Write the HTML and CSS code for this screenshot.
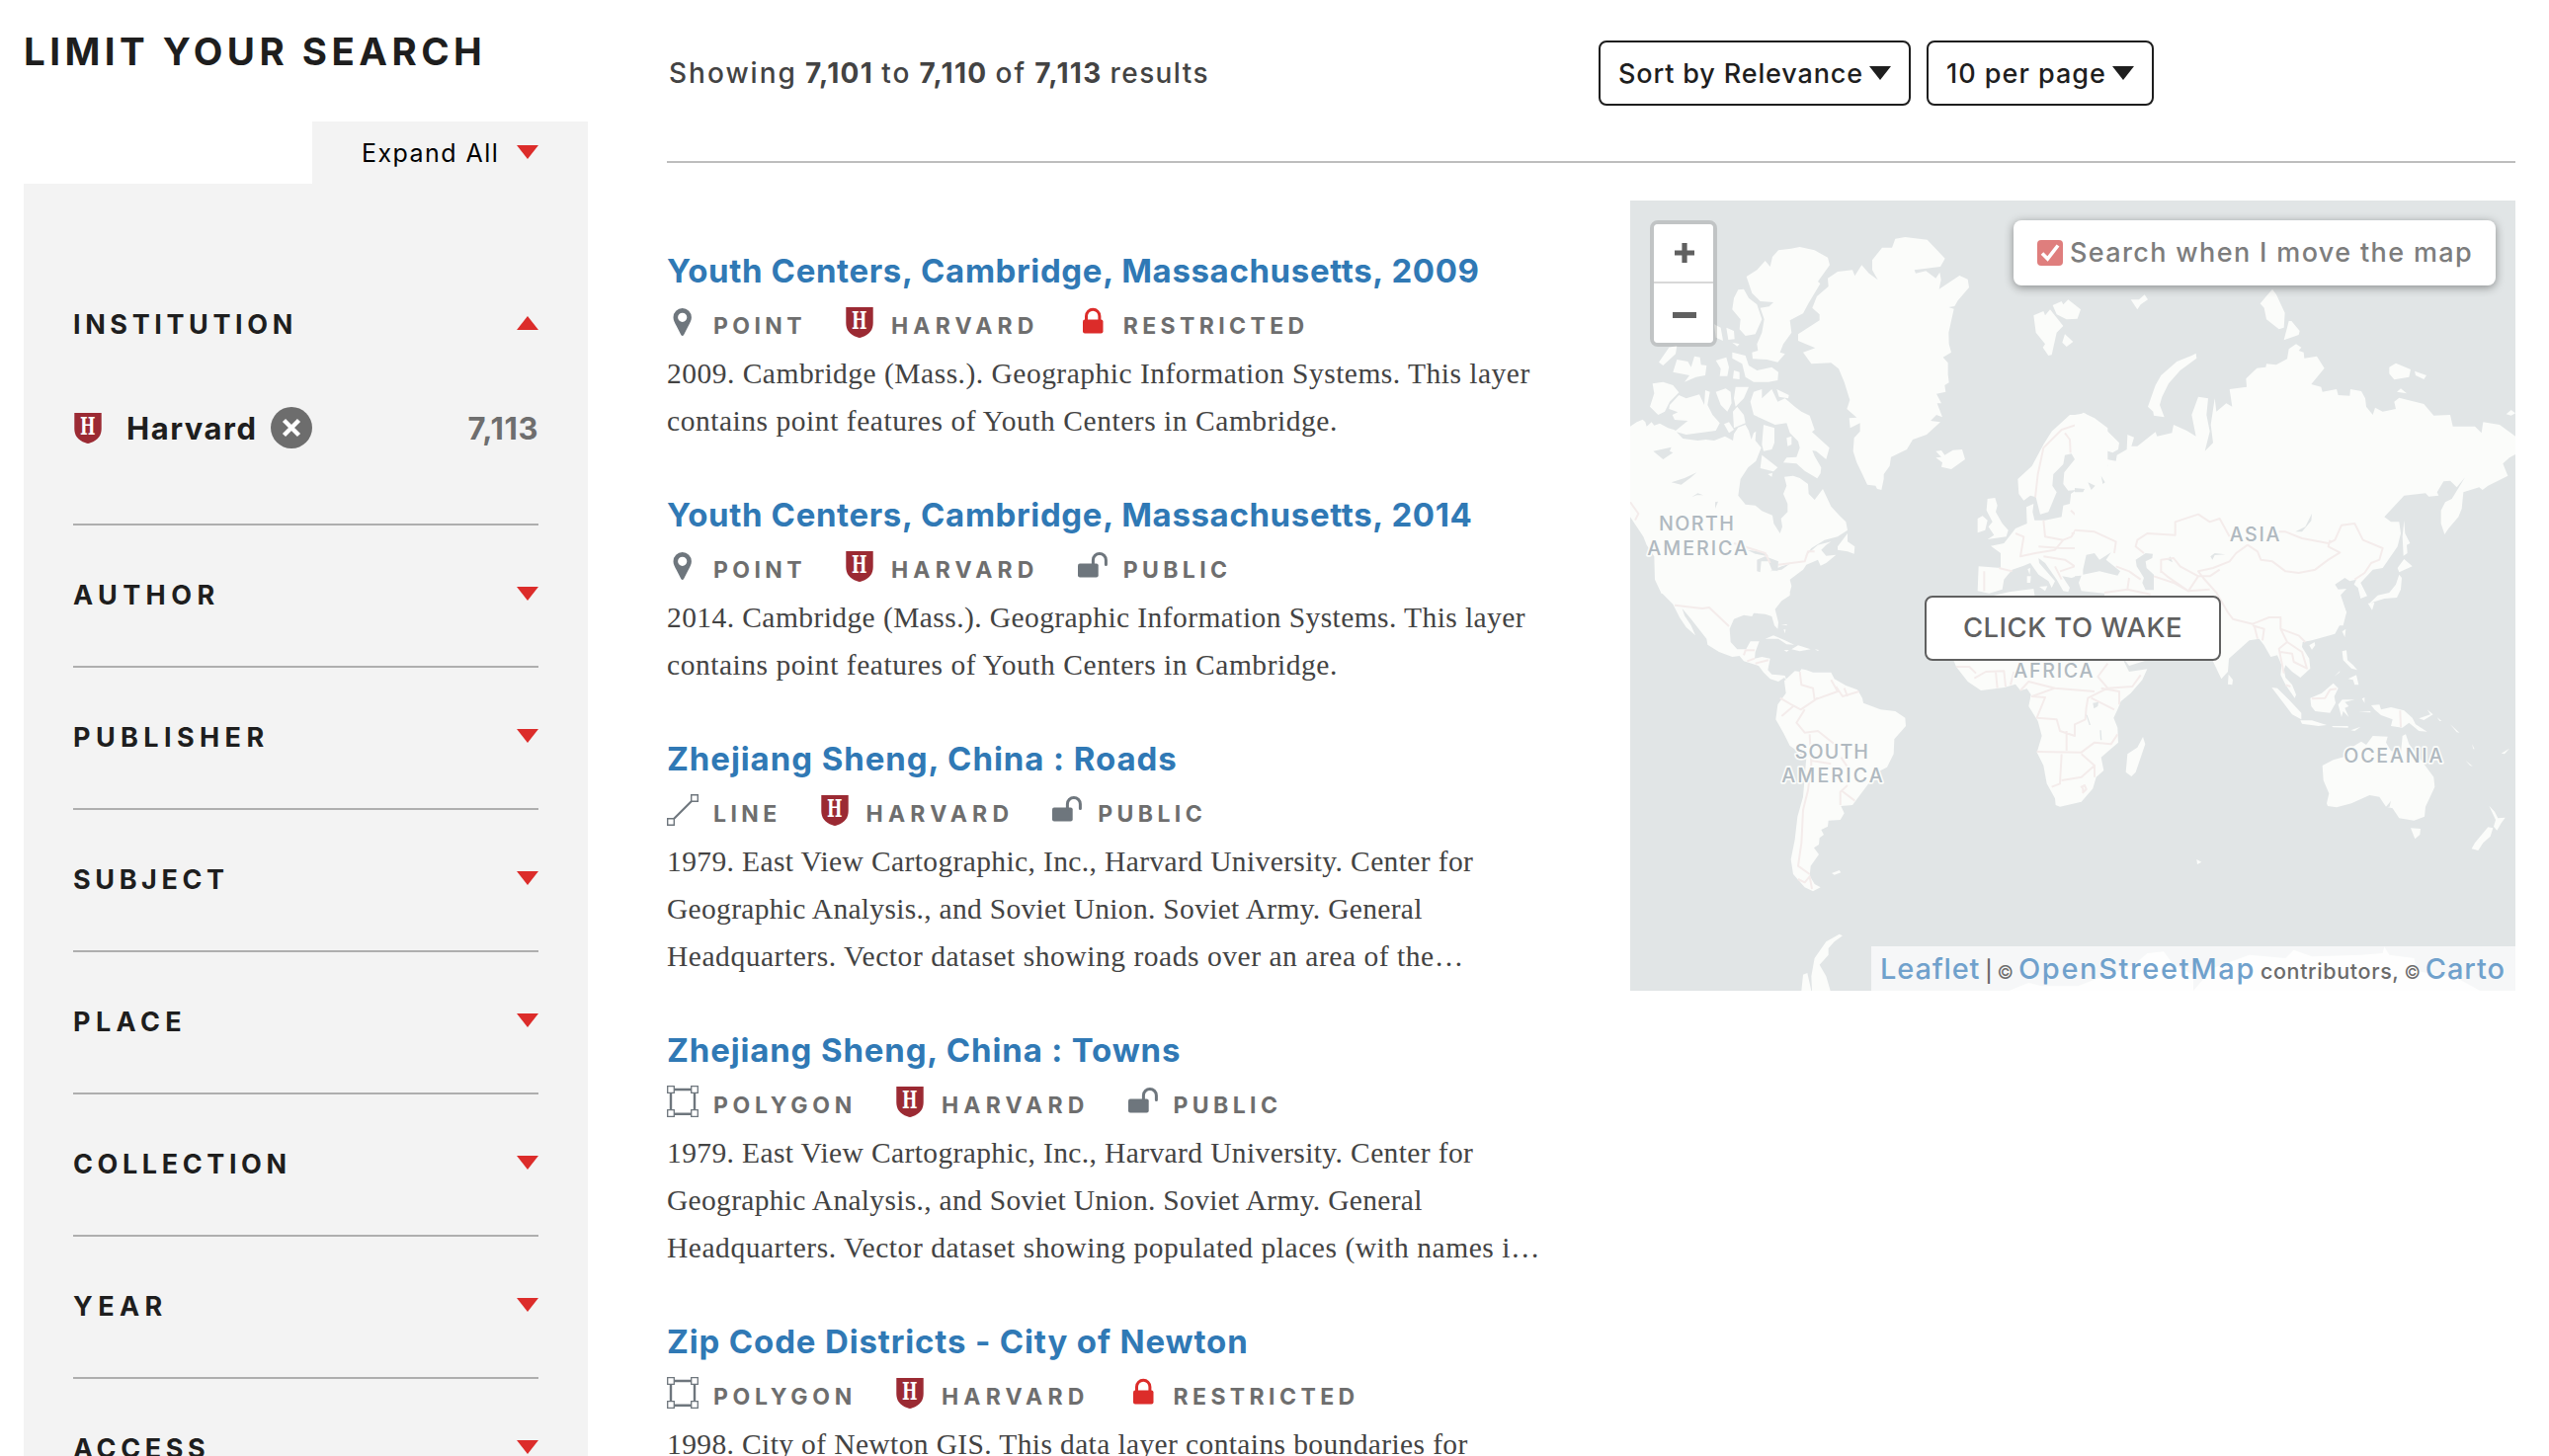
FILE: index.html
```html
<!DOCTYPE html>
<html lang="en">
<head>
<meta charset="utf-8">
<title>Search results</title>
<link rel="stylesheet" href="styles.css">
</head>
<body>
<svg class="sprite" aria-hidden="true">
  <symbol id="down" viewBox="0 0 22 14"><path d="M0 0H22L11 14Z"/></symbol>
  <symbol id="up" viewBox="0 0 22 14"><path d="M0 14H22L11 0Z"/></symbol>
  <symbol id="shield" viewBox="0 0 28 31"><path fill="#9b2a33" d="M.3 0H27.7V16C27.7 22.500 24.500 27.500 16.500 30.300Q14 31.500 11.500 30.300C3.500 27.500 .3 22.500 .3 16Z"/><text class="crest" x="6" y="22.300" textLength="15.500" lengthAdjust="spacingAndGlyphs">H</text></symbol>
  <symbol id="point" viewBox="0 0 32 32"><path fill="#6e767d" fill-rule="evenodd" d="M15.700 2a9.200 9.200 0 0 1 9.200 9.200c0 3.200-1.500 5.500-3.200 8.800l-4.600 9q-1.400 2-2.800 0l-4.600-9c-1.700-3.300-3.200-5.600-3.200-8.800A9.200 9.200 0 0 1 15.700 2Zm0 4.700a4.600 4.600 0 1 0 0 9.200 4.600 4.600 0 1 0 0-9.200Z"/></symbol>
  <symbol id="line" viewBox="0 0 32 32"><g fill="none" stroke="#6e767d"><path stroke-width="2.200" d="M6.500 25.500L25.500 6.500"/><path stroke-width="1.400" fill="#fff" d="M.7 24.700H7.300V31.300H.7ZM24.700 .7H31.300V7.300H24.700Z"/></g></symbol>
  <symbol id="polygon" viewBox="0 0 32 32"><g fill="none" stroke="#6e767d"><path stroke-width="2.400" d="M4 4H28V28.800H4Z"/><path stroke-width="1.300" fill="#fff" d="M.7 .7H7.300V7.300H.7ZM24.700 .7H31.300V7.300H24.700ZM.7 24.700H7.300V31.300H.7ZM24.700 24.700H31.300V31.300H24.700Z"/></g></symbol>
  <symbol id="locked" viewBox="0 0 32 32"><rect x="6" y="13.500" width="20.500" height="14" rx="2" fill="#dc2c2a"/><path fill="none" stroke="#dc2c2a" stroke-width="3" d="M9.500 15V10a6.700 6.700 0 0 1 13.400 0V15"/></symbol>
  <symbol id="unlocked" viewBox="0 0 32 32"><rect x="1" y="13.500" width="20.700" height="14" rx="2" fill="#6e767d"/><path fill="none" stroke="#6e767d" stroke-width="3" stroke-linecap="round" d="M16.400 15V10a6.500 6.500 0 0 1 13 0V14.500"/></symbol>
</svg>

<div class="page">
  <aside class="sidebar">
    <h2 class="sidebar-title">LIMIT YOUR SEARCH</h2>
    <div class="expand"><span>Expand All</span><svg class="tri red"><use href="#down"/></svg></div>
    <div class="panel">
      <section class="facet open">
        <h3 class="facet-head"><span class="f-a">INSTITUTION</span><svg class="tri red"><use href="#up"/></svg></h3>
        <div class="facet-value">
          <svg class="crest-icon"><use href="#shield"/></svg>
          <span class="value-name">Harvard</span>
          <span class="remove"><svg viewBox="0 0 42 42"><path d="M13.500 13.500L28.500 28.500M28.500 13.500L13.500 28.500" stroke="#fff" stroke-width="4.400"/></svg></span>
          <span class="value-count">7,113</span>
        </div>
      </section>
      <section class="facet"><h3 class="facet-head"><span class="f-b">AUTHOR</span><svg class="tri red"><use href="#down"/></svg></h3></section>
      <section class="facet"><h3 class="facet-head"><span class="f-b">PUBLISHER</span><svg class="tri red"><use href="#down"/></svg></h3></section>
      <section class="facet"><h3 class="facet-head"><span class="f-a">SUBJECT</span><svg class="tri red"><use href="#down"/></svg></h3></section>
      <section class="facet"><h3 class="facet-head"><span class="f-b">PLACE</span><svg class="tri red"><use href="#down"/></svg></h3></section>
      <section class="facet"><h3 class="facet-head"><span class="f-a">COLLECTION</span><svg class="tri red"><use href="#down"/></svg></h3></section>
      <section class="facet"><h3 class="facet-head"><span class="f-b">YEAR</span><svg class="tri red"><use href="#down"/></svg></h3></section>
      <section class="facet"><h3 class="facet-head"><span class="f-a">ACCESS</span><svg class="tri red"><use href="#down"/></svg></h3></section>
    </div>
  </aside>

  <main class="main">
    <header class="toolbar">
      <p class="showing">Showing <b>7,101</b> to <b>7,110</b> of <b>7,113</b> <span class="t14">results</span></p>
      <button class="drop sort"><span>Sort by Relevance</span><svg class="tri"><use href="#down"/></svg></button>
      <button class="drop per"><span>10 per page</span><svg class="tri"><use href="#down"/></svg></button>
    </header>

    <div class="columns">
      <div class="results">
        <article class="result">
          <h3 class="t06">Youth Centers, Cambridge, Massachusetts, 2009</h3>
          <div class="meta">
            <span class="tag"><svg><use href="#point"/></svg><span class="m44">POINT</span></span>
            <span class="tag"><svg class="crest-icon"><use href="#shield"/></svg><span class="m52">HARVARD</span></span>
            <span class="tag"><svg><use href="#locked"/></svg><span class="m44">RESTRICTED</span></span>
          </div>
          <p><span class="s50">2009. Cambridge (Mass.). Geographic Information Systems. This layer</span><span class="s55">contains point features of Youth Centers in Cambridge.</span></p>
        </article>
        <article class="result">
          <h3 class="t06">Youth Centers, Cambridge, Massachusetts, 2014</h3>
          <div class="meta">
            <span class="tag"><svg><use href="#point"/></svg><span class="m44">POINT</span></span>
            <span class="tag"><svg class="crest-icon"><use href="#shield"/></svg><span class="m52">HARVARD</span></span>
            <span class="tag"><svg><use href="#unlocked"/></svg><span class="m44">PUBLIC</span></span>
          </div>
          <p><span class="s43">2014. Cambridge (Mass.). Geographic Information Systems. This layer</span><span class="s55">contains point features of Youth Centers in Cambridge.</span></p>
        </article>
        <article class="result">
          <h3 class="t09">Zhejiang Sheng, China : Roads</h3>
          <div class="meta">
            <span class="tag"><svg><use href="#line"/></svg><span class="m44">LINE</span></span>
            <span class="tag"><svg class="crest-icon"><use href="#shield"/></svg><span class="m52">HARVARD</span></span>
            <span class="tag"><svg><use href="#unlocked"/></svg><span class="m44">PUBLIC</span></span>
          </div>
          <p><span class="s40">1979. East View Cartographic, Inc., Harvard University. Center for</span><span class="s30">Geographic Analysis., and Soviet Union. Soviet Army. General</span><span class="s55">Headquarters. Vector dataset showing roads over an area of the…</span></p>
        </article>
        <article class="result">
          <h3 class="t08">Zhejiang Sheng, China : Towns</h3>
          <div class="meta">
            <span class="tag"><svg><use href="#polygon"/></svg><span class="m47">POLYGON</span></span>
            <span class="tag"><svg class="crest-icon"><use href="#shield"/></svg><span class="m52">HARVARD</span></span>
            <span class="tag"><svg><use href="#unlocked"/></svg><span class="m44">PUBLIC</span></span>
          </div>
          <p><span class="s40">1979. East View Cartographic, Inc., Harvard University. Center for</span><span class="s30">Geographic Analysis., and Soviet Union. Soviet Army. General</span><span class="s55">Headquarters. Vector dataset showing populated places (with names i…</span></p>
        </article>
        <article class="result">
          <h3 class="t08">Zip Code Districts - City of Newton</h3>
          <div class="meta">
            <span class="tag"><svg><use href="#polygon"/></svg><span class="m47">POLYGON</span></span>
            <span class="tag"><svg class="crest-icon"><use href="#shield"/></svg><span class="m52">HARVARD</span></span>
            <span class="tag"><svg><use href="#locked"/></svg><span class="m44">RESTRICTED</span></span>
          </div>
          <p><span class="s40">1998. City of Newton GIS. This data layer contains boundaries for</span></p>
        </article>
      </div>

      <div class="map">
        <svg class="world" viewBox="0 0 2688 2400">
          <!-- North Atlantic quadrant -->
          <g transform="translate(-30 -39)">
            <path class="land" d="M30 725L50 712 68 704 76 712 80 725 95 712 103 722 120 716 145 730 165 736 190 762 235 768 260 765 285 768 318 755 342 768 345 748 358 728 380 720 390 738 398 765 405 745 412 740 410 768 428 790 412 830 388 850 365 885 358 935 380 962 410 965 430 982 462 995 466 1020 485 1050 492 1030 488 1005 508 985 508 960 495 930 505 905 498 878 525 875 545 882 570 900 572 930 590 948 615 915 640 968 665 995 685 1015 690 1040 660 1060 620 1070 580 1095 560 1120 600 1085 640 1075 625 1085 610 1100 625 1118 655 1115 625 1140 608 1148 600 1130 565 1145 555 1160 515 1190 520 1210 512 1240 125 1233 105 1190 103 1120 80 1085 70 1060 50 1030 30 1000Z
            M630 275L660 255 705 250 712 268 733 235 755 260 782 280 765 250 765 220 795 182 825 182 835 155 865 150 932 158 986 215 972 240 893 250 897 260 928 253 958 275 970 257 974 280 968 308 1030 267 1055 278 1059 303 1025 343 1015 360 997 363 1013 368 997 440 998 475 1005 500 980 515 995 532 995 568 998 592 985 600 988 620 960 626 975 655 962 655 978 697 960 690 942 708 972 712 930 750 888 765 870 795 822 818 818 845 800 870 800 885 793 918 780 915 775 905 750 902 735 870 718 835 707 800 710 760 728 740 728 715 698 730 695 700 718 698 688 672 697 645 680 590 663 550 640 532 580 535 555 500 592 487 540 465 540 445 605 403 605 385 583 365 597 330 632 300Z
            M455 240L462 210 480 190 518 185 545 180 590 190 630 212 636 235 600 285 607 292 572 350 555 382 515 403 520 440 495 475 485 500 500 505 478 530 445 522 402 520 400 500 418 495 415 475 430 440 437 400 425 365 452 361 465 348 425 345 400 320 383 270 415 250 440 222Z
            M358 310L375 308 390 335 415 355 430 400 410 445 380 450 362 430 365 400 340 370 345 335Z
            M285 415L305 425 312 465 290 455ZM322 425L345 435 347 460 328 462ZM340 470L362 475 355 482ZM117 530L148 485 172 480 168 505 130 540ZM160 560L172 522 205 528 215 545 225 512 242 515 245 538 262 540 258 570 230 575 195 590 210 570ZM290 525L322 515 330 545 325 572 302 572 305 550ZM340 500L380 510 390 540 415 555 460 545 480 560 478 585 450 590 405 590 380 575 370 535 340 518ZM345 555L362 560 362 582 342 580Z
            M98 595L130 590 160 600 178 622 150 650 135 680 115 690 90 665 103 625ZM150 660L178 630 200 640 240 628 255 660 258 615 272 620 265 660 280 690 302 715 290 738 200 750 165 740 180 728 205 708 165 705 158 690 175 682 148 672ZM290 620L320 610 335 620 338 655 325 680 305 660ZM350 605L390 605 375 640 350 665 345 640ZM342 680L355 665 375 690 380 715 345 730ZM315 718L330 712 345 735 330 745Z
            M395 650L405 620 430 612 430 640 460 612 478 650 500 640 530 665 550 680 575 692 590 735 582 742 635 790 625 825 595 800 583 798 590 815 610 850 608 868 598 883 560 860 535 838 495 835 505 820 535 818 545 790 540 770 515 745 505 715 470 720 405 690ZM475 612L512 630 510 640 482 635ZM435 720L468 730 468 775 460 795 435 800 430 780ZM505 760L520 755 520 780 508 785ZM430 812L478 850 465 862 425 852ZM448 870L462 866 460 878ZM660 1090L690 1050 690 1075 712 1090 710 1112 690 1105 660 1100Z
            M958 800L975 798 985 812 1010 797 1038 795 1047 825 1005 855 975 848 978 835 958 820 975 818Z
            M1255 388L1285 375 1290 388 1305 370 1345 420 1325 440 1310 508 1300 510 1283 485 1290 475 1262 440ZM1313 357L1340 345 1345 355 1360 340 1398 370 1388 398 1355 400 1325 385ZM1350 445L1375 468 1355 483 1342 470Z
            M1207 885L1250 845 1285 780 1310 740 1365 690 1400 690 1405 683 1440 700 1480 730 1480 960 1368 950 1368 930 1385 918 1360 920 1345 900 1348 865 1380 825 1370 808 1350 812 1345 840 1315 870 1312 905 1325 925 1300 985 1275 992 1262 940 1245 935 1225 950 1210 930Z
            M1368 935L1500 935 1500 1100 1440 1105 1410 1130 1402 1175 1370 1185 1342 1180 1365 1215 1360 1228 1345 1225 1325 1190 1290 1140 1270 1125 1272 1140 1320 1195 1310 1215 1300 1195 1270 1175 1245 1140 1225 1148 1190 1160 1165 1190 1160 1220 1120 1232 1085 1225 1088 1150 1155 1155 1155 1110 1125 1088 1165 1080 1200 1035 1235 1020 1233 970 1255 960 1252 985 1258 1010 1290 1010 1340 1000 1345 965 1365 960Z
            M1115 945L1138 942 1145 965 1140 985 1160 1020 1178 1040 1172 1060 1115 1068 1135 1055 1118 1030 1130 1015 1112 980ZM1085 1005L1100 997 1115 1010 1108 1040 1085 1048ZM1235 1180L1247 1180 1245 1200 1235 1200ZM1237 1158L1245 1155 1243 1175ZM1272 1212L1297 1210 1290 1225ZM1130 1240L1180 1228 1255 1218 1260 1250 1130 1250Z"/>
            <path class="sea" d="M100 800L155 788 150 800 160 805 130 825ZM155 895L195 882 232 865 215 880 185 902ZM217 940L235 928 252 934 232 934ZM288 955L297 953 288 975ZM415 1130L440 1120 480 1135 478 1165 460 1160 450 1135 428 1135 425 1168 415 1165ZM385 1100L440 1108 450 1120 410 1112ZM455 1165L490 1150 515 1142 490 1160Z"/>
            <path class="border" d="M1260 940L1268 870 1285 790 1340 735 1400 715 1415 800 1430 870 1400 915M1350 745L1365 765 1367 805M1200 1050L1225 1060 1215 1120 1260 1110 1320 1100 1345 1070 1290 1060 1285 1010M1345 1070L1370 1060 1400 1010 1368 980M1370 1050L1440 1045M1270 1090L1340 1095 1410 1095 1425 1120M1285 1120L1350 1130 1380 1150 1335 1165M1320 1150L1340 1190M1150 1155L1190 1165M1105 1165L1105 1225M165 1270L250 1278 315 1320M30 955L55 990 45 1010M345 1080L440 1110 455 1140M480 1145L560 1135 570 1105 590 1105"/>
          </g>
          <!-- Eurasia quadrant -->
          <g transform="translate(1350 -39)">
            <path class="land" d="M0 690L30 685 50 700 55 720 100 740 135 775 132 795 115 805 68 790 82 810 90 845 100 845 97 825 125 830 128 812 158 795 160 750 180 758 172 785 190 785 245 742 250 755 295 745 300 720 340 738 368 755 355 690 375 635 405 640 400 690 410 740 395 800 420 775 413 720 425 640 430 680 460 655 478 665 470 612 522 605 520 580 553 548 580 545 582 535 612 538 645 520 650 490 672 475 688 485 680 495 695 500 697 518 735 512 758 548 718 597 748 605 752 620 795 612 800 630 835 632 837 612 870 618 882 640 885 665 905 690 912 668 935 680 975 672 970 650 985 638 1060 657 1090 692 1140 690 1148 725 1215 725 1235 745 1240 712 1290 720 1338 755 1338 810 1320 820 1300 838 1315 875 1255 905 1238 918 1228 910 1180 925 1175 975 1165 1000 1135 1035 1123 1053 1112 1020 1112 980 1125 955 1145 945 1185 880 1160 910 1140 890 1120 892 1100 925 1105 935 1075 938 1065 928 1000 935 940 1000 960 1015 985 1015 990 1050 980 1090 935 1155 905 1160 868 1200 888 1240 868 1248 860 1215 848 1205 855 1190 835 1195 820 1185 790 1205 800 1220 825 1218 805 1240 825 1290 815 1330 0 1330Z
            M222 665L245 600 262 570 310 528 355 510 368 503 370 518 320 555 285 595 265 635 258 660 272 697 240 692 238 680ZM563 352L600 308 612 325 638 380 635 425 620 430 582 400 575 365ZM635 463L650 405 658 405 683 435 680 447ZM170 340L195 340 212 325 222 340 200 355 190 370ZM955 545L975 533 1020 552 1015 575 970 583 955 565ZM1032 557L1068 570 1060 582 1035 570ZM978 620L990 610 1008 625ZM1310 688L1325 675 1338 685 1325 692ZM1000 1010L1003 1050 1018 1080 1008 1085 1010 1110 998 1118 995 1060ZM1000 1128L1025 1150 985 1168 980 1155ZM985 1175L993 1185 990 1220 978 1245 940 1248 895 1262 920 1238 955 1230 975 1205ZM890 1262L910 1260 903 1283Z"/>
            <path class="sea" d="M25 1160L35 1115 60 1110 75 1130 110 1108 95 1130 138 1165 130 1178 75 1165 25 1175ZM185 1130L215 1110 237 1112 235 1125 215 1135 218 1155 240 1175 240 1222 215 1222 205 1200 210 1185 188 1150ZM0 1180L20 1178 12 1200 20 1225 90 1232 90 1330 0 1330ZM670 1045L700 1030 720 990 718 1012 690 1045ZM40 895L62 905 50 918ZM80 875L92 895 85 900ZM0 912L30 915 25 925 0 925ZM412 1120L425 1110 457 1114 425 1116 418 1130ZM282 1130L290 1120 297 1138Z"/>
            <path class="border" d="M210 1110L185 1090 190 1070 220 1050 305 1055 305 1015 375 992 410 1015 440 1005 470 1060M620 1045L640 1045 690 1065 770 1080 790 1070 810 1025 850 1020 875 1070 935 1095 925 1130 900 1140 880 1170 850 1190M525 1085L555 1105 565 1130 600 1135 640 1165 680 1170 730 1160 770 1130 805 1108 770 1090 775 1070M525 1085L490 1110 470 1135 420 1155 375 1165 390 1185 430 1230 470 1290 600 1310M262 1170L262 1130 300 1125 320 1150 375 1180 345 1225 280 1180 262 1165M375 1180L410 1180 440 1160M0 1040L60 1045 125 1075 120 1110M125 1150L165 1165 200 1190M90 1230L160 1220 165 1185M160 1220L230 1235M240 1180L300 1200 345 1225 410 1220"/>
          </g>
          <!-- Americas and Africa quadrant -->
          <g transform="translate(-30 1191)">
            <path class="land" d="M125 0L160 35 180 75 200 105 228 130 215 100 195 70 188 48 215 80 262 140 265 158 300 180 340 195 362 192 375 208 420 222 435 242 455 262 480 270 498 258 505 268 500 252 480 250 460 248 448 235 455 200 430 195 408 200 410 180 422 148 395 148 382 172 355 172 335 150 332 110 345 80 375 68 400 72 405 62 440 65 460 72 468 100 478 110 480 90 470 50 490 25 515 8 515 0Z
            M498 268L530 238 545 240 550 232 565 235 585 242 640 242 650 262 685 282 720 295 735 320 738 335 790 355 835 360 865 380 867 405 832 445 830 490 810 530 780 545 750 585 705 645 670 648 680 670 668 690 632 692 630 710 610 720 618 735 605 745 603 765 588 775 603 795 578 830 575 860 590 885 608 895 585 907 560 895 525 855 518 810 530 750 538 680 555 620 565 500 515 465 495 425 472 385 478 340 503 305Z
            M440 140L465 130 500 145 528 158 505 157 480 140ZM520 172L540 160 578 172 545 178ZM497 174L512 174 505 180ZM590 172L603 174 600 177ZM642 852L665 843 670 850 650 857ZM488 96L506 96 506 100ZM496 112L502 112 500 124Z
            M665 1037L675 1042 650 1060 632 1080 632 1100 605 1130 625 1165 638 1209 582 1209 580 1165 590 1110 625 1060ZM550 1209L555 1160 568 1155 580 1209ZM1180 1209L1240 1185 1280 1195 1390 1195 1440 1175 1560 1130 1600 1095 1650 1090 1680 1130 1740 1160 1740 1209Z
            M1010 200L1020 225 1055 270 1095 297 1165 288 1200 278 1215 297 1235 292 1247 310 1240 345 1268 390 1280 435 1265 485 1285 525 1295 580 1320 625 1322 645 1335 650 1400 635 1435 595 1445 560 1468 540 1460 500 1512 455 1510 410 1498 380 1510 355 1520 330 1550 305 1585 265 1600 232 1545 240 1525 200ZM1532 205L1600 205 1545 222Z"/>
            <path class="border" d="M165 38L250 48 270 45 330 102M375 190L380 175 408 175M385 208L408 200M410 215L450 205M545 240L550 280 585 290 590 325 660 300 640 265M655 285L675 315 725 300M680 290L690 315M485 320L520 340 548 355 600 320M490 375L525 345M560 355L535 395 560 425 600 420 650 460M575 430L580 520 570 600 555 660 550 760 540 830 575 855M580 510L640 520M670 500L690 530M670 600L712 632M690 585L668 605 668 645M540 870L560 880 575 862 582 900
            M1075 260L1110 240 1165 238 1170 285M1140 240L1145 290M1020 225L1060 225 1080 245M1185 280L1195 240M1215 297L1240 270 1320 290 1250 315 1290 318 1265 380 1325 385 1335 420 1380 435 1380 400 1412 385 1415 350 1420 320 1480 290 1450 255 1480 215M1320 290L1440 300M1265 483L1400 485 1440 455 1490 460 1510 430M1340 490L1335 580 1310 590M1355 420L1355 480M1400 490L1440 525 1400 560 1340 570M1440 525L1440 560M1480 290L1555 285 1580 250M1430 320L1500 355M1460 290L1515 300 1515 340M1405 595L1400 590 1410 585 1415 597 1405 607Z"/>
          </g>
          <!-- Indian and Pacific quadrant -->
          <g transform="translate(1350 1191)">
            <path class="land" d="M418 205L445 262 465 240 468 200 530 145 560 140 575 160 595 195 615 190 628 220 625 250 640 280 668 320 672 310 660 280 640 258 635 235 640 220 660 240 685 258 715 230 712 200 690 165 692 150 720 145 790 125 825 60 805 0 400 0 400 205ZM467 248L480 265 478 280 465 278ZM712 160L728 150 730 160 720 173ZM812 118L823 110 820 135ZM598 288L615 290 650 325 688 365 688 385 660 370 630 330ZM685 388L720 388 765 402 740 405 690 398ZM780 405L830 405 830 410 785 409ZM838 418L868 407 850 420ZM715 320L750 305 785 275 800 290 788 315 792 335 775 365 730 360 718 345ZM800 340L812 325 850 325 820 332 832 345 820 350 832 378 815 360 810 378ZM812 178L825 175 828 205 845 220 858 235 840 230 815 205ZM830 262L855 250 862 280 850 280 845 265ZM788 254L805 238 804 242ZM900 342L925 340 930 355 960 348 1000 358 1025 380 1035 400 1070 422 1045 420 1015 395 995 410 960 405 965 385 930 372 910 355ZM1045 382L1080 370 1070 355 1088 370 1060 387ZM872 322L880 318 880 335ZM862 362L898 360 898 364ZM1100 378L1114 390 1108 390ZM1140 400L1168 425 1160 424ZM1187 510L1208 527 1200 525ZM1295 488L1320 473 1305 490ZM1206 460L1214 475 1210 475Z
            M752 525L785 508 830 495 840 470 870 452 885 462 905 435 950 437 945 455 960 480 990 490 995 435 1005 430 1015 460 1030 480 1060 520 1090 560 1093 590 1065 650 1062 680 1030 692 985 685 965 655 945 650 925 620 895 615 840 640 795 652 768 648 765 640 772 610 755 570ZM1020 715L1050 717 1048 735 1033 748ZM1258 647L1275 665 1285 685 1307 683 1295 700 1282 722 1272 710 1278 690ZM1270 715L1262 740 1240 760 1225 783 1205 778 1215 760 1255 712ZM370 810L385 818 372 825ZM207 438L214 460 185 545 172 558 155 545 160 490 190 470Z
            M360 1209L420 1140 530 1100 640 1110 665 1085 720 1105 870 1100 935 1095 940 1075 955 1100 1030 1110 1040 1150 1160 1170 1230 1209Z"/>
            <path class="sea" d="M55 335L72 332 70 345 58 352ZM34 370L38 372 48 402 44 402ZM76 418L80 418 82 448 78 448ZM944 652L960 632 956 650Z"/>
            <path class="border" d="M430 0L465 60M465 60L480 80 540 95 590 75 625 75 625 110 680 130 700 150M545 100L555 140M540 100L575 110 570 145M625 110L645 150 620 170 635 245M645 150L690 180 705 230 665 210 660 185 625 180M640 280L655 285M720 322L760 320 775 295 795 292M988 358L990 408"/>
          </g>
          <g class="places">
            <text x="87" y="1003" textLength="228">NORTH</text>
            <text x="52" y="1076" textLength="305">AMERICA</text>
            <text x="1820" y="1036" textLength="152">ASIA</text>
            <text x="1165" y="1448" textLength="240">AFRICA</text>
            <text x="500" y="1694" textLength="223">SOUTH</text>
            <text x="460" y="1767" textLength="307">AMERICA</text>
            <text x="2167" y="1706" textLength="300">OCEANIA</text>
          </g>
        </svg>
        <div class="zoom">
          <span class="zoom-btn"><svg viewBox="0 0 24 24"><path d="M12 2V22M2 12H22" stroke="#606060" stroke-width="5.200"/></svg></span>
          <span class="zoom-btn minus"><svg viewBox="0 0 24 24"><path d="M0 12H24" stroke="#606060" stroke-width="6"/></svg></span>
        </div>
        <label class="move-search"><svg class="check" viewBox="0 0 26 26"><rect width="26" height="26" rx="4" fill="#df7e7d"/><path d="M5 13.500L10.500 19 21 5.500" fill="none" stroke="#fff" stroke-width="3.600"/></svg><span>Search when I move the map</span></label>
        <div class="wake">CLICK TO WAKE</div>
        <div class="credits"><a class="t08">Leaflet</a><span>|</span><span class="copy">©</span><a class="t16">OpenStreetMap</a><span class="t06">contributors,</span><span class="copy">©</span><a class="t09">Carto</a></div>
      </div>
    </div>
  </main>
</div>
</body>
</html>
```
FILE: styles.css
```css
* { box-sizing: border-box; }
body { margin: 0; background: #fff; font-family: Inter, "Open Sans", sans-serif; color: #1e1e1e; }
h2, h3, p { margin: 0; }
.sprite { display: none; }
.crest { font: 700 25px "DejaVu Serif", serif; fill: #fff; }
.page { display: flex; height: 1474px; overflow: hidden; padding-left: 24px; }

.sidebar { width: 571px; flex: none; }
.sidebar-title { margin-top: 27px; font-size: 38.5px; line-height: 50px; font-weight: 700; letter-spacing: 4.45px; white-space: nowrap; }
.expand { width: 279px; height: 63px; margin: 46px 0 0 auto; padding: 0 50px; display: flex; align-items: center; justify-content: space-between; background: #f3f3f3; color: #000; font-size: 25px; letter-spacing: 1.45px; white-space: nowrap; }
.expand .tri { margin-bottom: 1px; }
.tri { width: 22px; height: 14px; fill: #1e1e1e; flex: none; }
.red { fill: #dc2c2a; }
.panel { background: #f3f3f3; padding: 72px 50px 0; height: 1400px; }
.facet { border-top: 2px solid #aeaeae; }
.facet.open { border-top: 0; height: 272px; }
.facet-head { height: 142px; display: flex; align-items: center; justify-content: space-between; font-size: 27px; font-weight: 700; }
.facet-head span { padding-bottom: 2px; }
.facet-head .tri { margin-bottom: 4px; }
.f-a { letter-spacing: 4.6px; }
.f-b { letter-spacing: 5.4px; }
.facet-value { height: 66px; display: flex; align-items: center; font-size: 31px; font-weight: 700; }
.facet-value .crest-icon { width: 28px; height: 31px; margin-left: 1px; }
.value-name { margin-left: 25px; letter-spacing: 1.5px; }
.remove { width: 42px; height: 42px; margin-left: 14px; border-radius: 50%; background: #6d6d6d; }
.value-count { margin-left: auto; color: #6e6e6e; letter-spacing: .6px; }

.main { width: 1871px; margin-left: 80px; flex: none; }
.toolbar { display: flex; align-items: center; height: 165px; padding: 41px 0 56px; border-bottom: 2px solid #bdbdbd; }
.showing { width: 943px; padding-left: 2px; color: #434343; font-size: 28px; font-weight: 500; letter-spacing: 2px; word-spacing: -1.4px; }
.showing b { letter-spacing: 1.3px; }
.drop { height: 66px; padding: 0 18px; display: flex; align-items: center; justify-content: space-between; border: 2px solid #1e1e1e; border-radius: 8px; background: #fff; color: #1e1e1e; font: 500 27px Inter, sans-serif; letter-spacing: 1px; white-space: nowrap; }
.sort { width: 316px; letter-spacing: .85px; }
.per { width: 230px; margin-left: 16px; }

.columns { display: flex; }
.results { width: 975px; padding-top: 85px; }
.result { margin-bottom: 47px; }
.result h3 { height: 48px; font-size: 33px; line-height: 48px; font-weight: 700; color: #3079b5; white-space: nowrap; }
.meta { height: 56px; display: flex; align-items: center; gap: 38px; color: #6e6e6e; font-size: 23px; font-weight: 700; }
.tag { display: flex; align-items: center; gap: 15px; }
.tag svg { width: 32px; height: 32px; flex: none; }
.tag .crest-icon { width: 28px; height: 31px; margin: 1px 3px 0 2px; }
.tag span { padding-top: 7px; }
.result p { font: 29.5px/48px "Liberation Serif", serif; color: #434343; }
.result p span { display: block; white-space: nowrap; }

.t06 { letter-spacing: .63px; }
.t08 { letter-spacing: .84px; }
.t09 { letter-spacing: .92px; }
.t14 { letter-spacing: 1.4px; }
.t16 { letter-spacing: 1.64px; }
.m44 { letter-spacing: 4.4px; }
.m47 { letter-spacing: 4.7px; }
.m52 { letter-spacing: 5.2px; }
.s30 { letter-spacing: .31px; }
.s40 { letter-spacing: .38px; }
.s43 { letter-spacing: .42px; }
.s50 { letter-spacing: .49px; }
.s55 { letter-spacing: .54px; }

.map { position: relative; width: 896px; height: 800px; margin-top: 38px; overflow: hidden; background: #e1e5e6; }
.world { display: block; width: 896px; height: 800px; }
.land { fill: #fbfcfa; }
.sea { fill: #e1e5e6; }
.border { fill: none; stroke: #f4eceb; stroke-width: 6; stroke-linejoin: round; }
.places text { font: 500 59px Inter, sans-serif; fill: #b0b9c0; stroke: #fbfcfa; stroke-width: 10; stroke-linejoin: round; paint-order: stroke; }
.zoom { position: absolute; left: 20px; top: 20px; border: 4px solid rgba(0, 0, 0, .14); border-radius: 8px; }
.zoom-btn { display: flex; align-items: center; justify-content: center; width: 60px; height: 60px; background: #fff; background-clip: padding-box; border-radius: 0 0 4px 4px; }
.zoom-btn:first-child { border-bottom: 2px solid #d8d8d8; border-radius: 4px 4px 0 0; }
.zoom-btn svg { width: 24px; height: 24px; margin-left: 2px; }
.minus { padding-top: 4px; }
.move-search { position: absolute; right: 20px; top: 20px; width: 488px; height: 66px; padding-left: 24px; display: flex; align-items: center; gap: 7px; border-radius: 8px; background: #fff; box-shadow: 0 2px 10px rgba(0, 0, 0, .4); color: #7d7d7d; font-size: 27px; font-weight: 500; letter-spacing: 1.36px; white-space: nowrap; }
.move-search span { padding-bottom: 1px; }
.check { width: 26px; height: 26px; }
.wake { position: absolute; left: 298px; top: 400px; width: 300px; height: 66px; padding-bottom: 2px; display: flex; align-items: center; justify-content: center; border: 2px solid #606060; border-radius: 8px; background: #fff; color: #606060; font-size: 27.5px; font-weight: 500; letter-spacing: .46px; white-space: nowrap; }
.credits { position: absolute; right: 0; bottom: 0; width: 652px; height: 45px; padding: 0 10px 0 9px; display: flex; align-items: baseline; justify-content: space-between; background: rgba(255, 255, 255, .7); color: #6b6b6b; font-size: 21.5px; font-weight: 500; line-height: 45px; white-space: nowrap; }
.credits a { color: #70a1cc; font-size: 29px; }
.copy { font-size: 18px; font-weight: 400; }
```
